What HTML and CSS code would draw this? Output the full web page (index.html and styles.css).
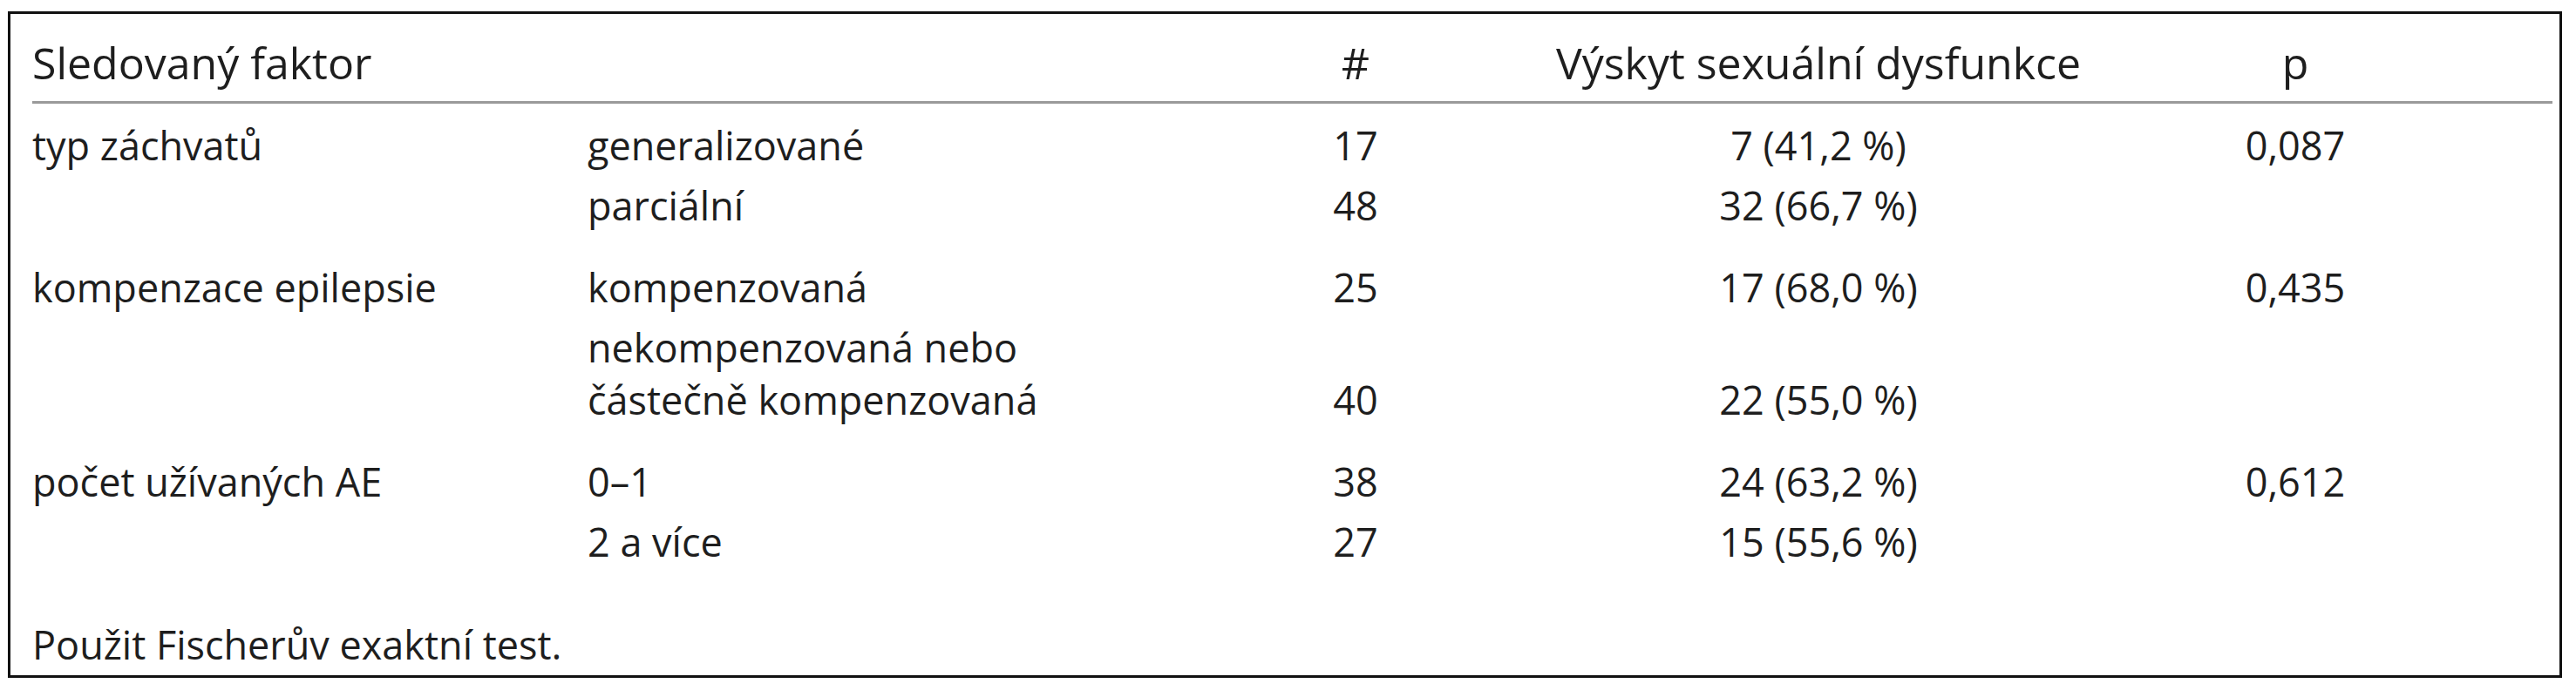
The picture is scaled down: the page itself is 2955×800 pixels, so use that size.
FILE: index.html
```html
<!DOCTYPE html>
<html lang="cs">
<head>
<meta charset="utf-8">
<title>Tabulka</title>
<link rel="stylesheet" href="styles.css">
</head>
<body>
<div class="tbl">
  <div class="row head">
    <div class="c1">Sledovaný faktor</div>
    <div class="c2"></div>
    <div class="c3">#</div>
    <div class="c4">Výskyt sexuální dysfunkce</div>
    <div class="c5">p</div>
  </div>
  <div class="body">
    <div class="group">
      <div class="row">
        <div class="c1">typ záchvatů</div>
        <div class="c2">generalizované</div>
        <div class="c3">17</div>
        <div class="c4">7 (41,2 %)</div>
        <div class="c5">0,087</div>
      </div>
      <div class="row">
        <div class="c1"></div>
        <div class="c2">parciální</div>
        <div class="c3">48</div>
        <div class="c4">32 (66,7 %)</div>
        <div class="c5"></div>
      </div>
    </div>
    <div class="group">
      <div class="row">
        <div class="c1">kompenzace epilepsie</div>
        <div class="c2">kompenzovaná</div>
        <div class="c3">25</div>
        <div class="c4">17 (68,0 %)</div>
        <div class="c5">0,435</div>
      </div>
      <div class="row bottom">
        <div class="c1"></div>
        <div class="c2">nekompenzovaná nebo<br>částečně kompenzovaná</div>
        <div class="c3">40</div>
        <div class="c4">22 (55,0 %)</div>
        <div class="c5"></div>
      </div>
    </div>
    <div class="group">
      <div class="row">
        <div class="c1">počet užívaných AE</div>
        <div class="c2">0–1</div>
        <div class="c3">38</div>
        <div class="c4">24 (63,2 %)</div>
        <div class="c5">0,612</div>
      </div>
      <div class="row">
        <div class="c1"></div>
        <div class="c2">2 a více</div>
        <div class="c3">27</div>
        <div class="c4">15 (55,6 %)</div>
        <div class="c5"></div>
      </div>
    </div>
  </div>
  <div class="note">Použit Fischerův exaktní test.</div>
</div>
</body>
</html>
```
FILE: styles.css
```css
html, body {
  margin: 0;
  padding: 0;
  background: #ffffff;
}
body {
  font-family: "Open Sans", "Noto Sans", sans-serif;
  font-size: 45px;
  line-height: 60px;
  color: #1e1e1e;
}
.tbl {
  box-sizing: border-box;
  width: 2930px;
  margin: 13px 0 0 9px;
  border: 3px solid #111111;
  padding: 26px 8px 5px 25px;
}
.row {
  display: grid;
  grid-template-columns: 637px 781px 200px 862px 232px 1fr;
  align-items: start;
}
.row.bottom {
  align-items: end;
}
.head {
  font-size: 50px;
  font-weight: 500;
  padding-bottom: 14px;
  border-bottom: 3px solid #9a9a9a;
}
.body {
  display: flex;
  flex-direction: column;
  gap: 34px;
  padding-top: 18px;
}
.group {
  display: flex;
  flex-direction: column;
  gap: 9px;
}
.c1, .c2 {
  text-align: left;
}
.c3, .c4, .c5 {
  text-align: center;
}
.note {
  margin-top: 58px;
}
```
